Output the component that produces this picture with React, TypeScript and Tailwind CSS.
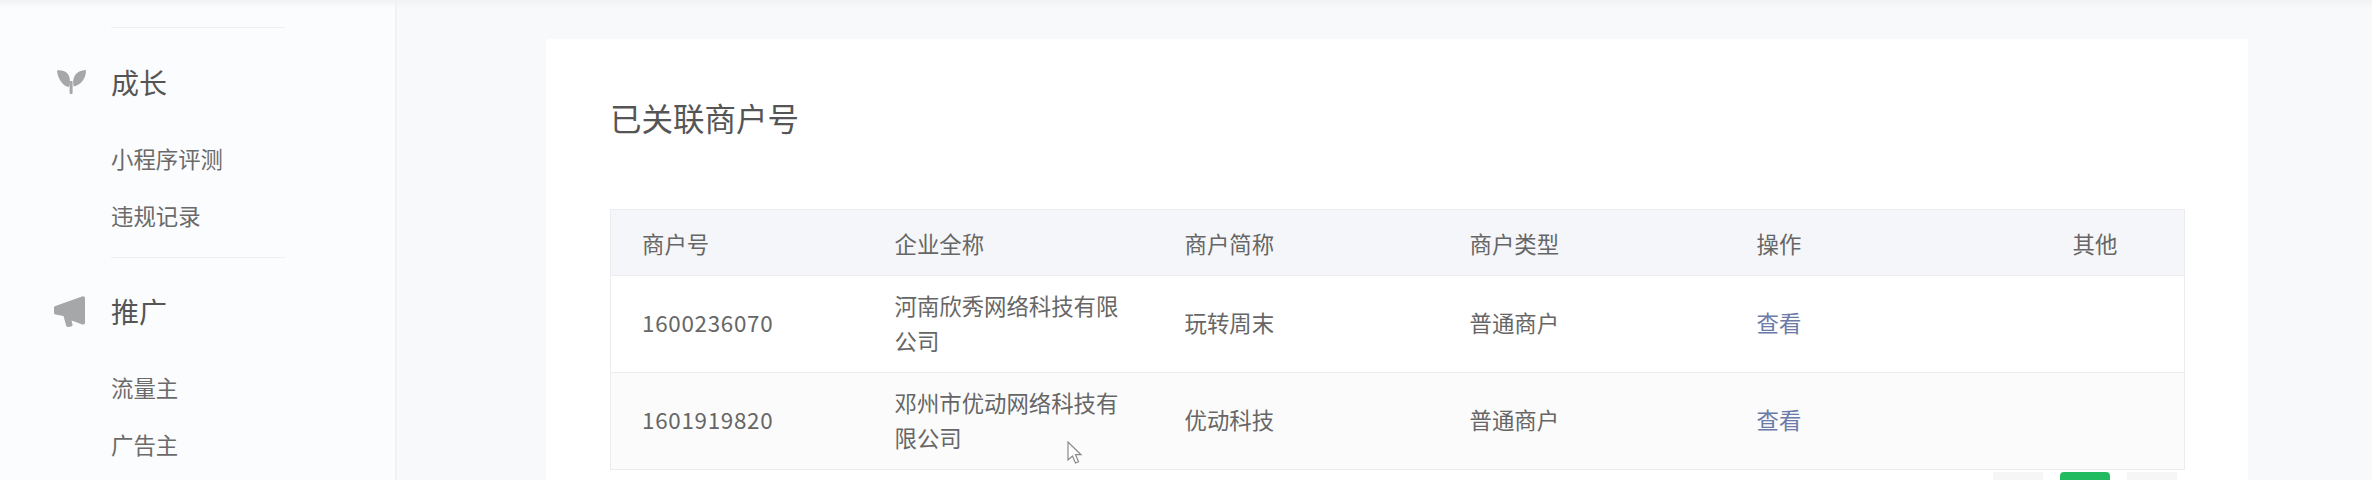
const FONT = "font-['Noto_Sans_CJK_SC','Noto_Sans',sans-serif]";

const HEADERS = ['商户号', '企业全称', '商户简称', '商户类型', '操作', '其他'];

const ROWS = [
  { id: '1600236070', company: '河南欣秀网络科技有限公司', short: '玩转周末', type: '普通商户' },
  { id: '1601919820', company: '邓州市优动网络科技有限公司', short: '优动科技', type: '普通商户' },
];

const NAV = [
  { title: '成长', icon: <SproutIcon />, items: ['小程序评测', '违规记录'] },
  { title: '推广', icon: <MegaphoneIcon />, items: ['流量主', '广告主'] },
];

function SproutIcon() {
  return (
    <svg viewBox="0 0 29 24" className="h-[24px] w-[29px] fill-[#a5a7a9]">
      <path d="M0 .4C3.500-.2 7.500.6 10 3c2.600 2.600 3.300 6.500 2.800 10.500-.1 1.500-.5 3-1.500 3.500C5.500 15.500.4 8 0 .4Z" />
      <path d="M29 0c0 4-1 8-3.500 11-2.200 2.800-5.500 4.800-8.800 5.400-.8-3.400-.9-7 .8-10.200C19.500 2 24.500.2 29 0Z" />
      <rect x="12.600" y="11" width="3" height="13" rx="1" />
    </svg>
  );
}

function MegaphoneIcon() {
  return (
    <svg viewBox="0 0 31 31" className="h-[31px] w-[31px] fill-[#a5a7a9]">
      <path d="M28 .4c1.600-.6 3 .2 3 1.600v24.800c0 1.400-1.200 2-2.600 1.600L17.500 24.500l1 4c.3 1.200-.3 1.800-1.300 2l-3 .5c-1 .1-1.600-.3-2-1.200L9.500 20 1.500 18.500C.6 18.300 0 17.600 0 16.700v-5c0-.9.5-1.500 1.400-1.800L28 .4Z" />
    </svg>
  );
}

function Sidebar() {
  return (
    <aside className="w-[397px] shrink-0 border-r-2 border-[#f1f2f4] bg-[#fbfcfd]">
      <div className="ml-[111px] mt-[27px] h-px w-[174px] bg-[#eff0f2]" />
      {NAV.map((section, i) => (
        <div key={section.title} className="pl-[54px]">
          <div className={`flex h-[40px] items-center ${i === 0 ? 'mt-[34px]' : 'mt-[33px]'}`}>
            <span className={`flex w-[57px] items-center ${i === 0 ? 'pl-[3px]' : ''}`}>{section.icon}</span>
            <span className="pb-[1px] text-[28px] leading-none text-[#555]">{section.title}</span>
          </div>
          <ul className="mt-[28px] pl-[57px]">
            {section.items.map(item => (
              <li key={item} className="flex h-[57px] items-center text-[22.4px] text-[#6a6a6a]">
                {item}
              </li>
            ))}
          </ul>
          {i === 0 && <div className="ml-[57px] mt-[13px] h-px w-[174px] bg-[#eff0f2]" />}
        </div>
      ))}
    </aside>
  );
}

function MerchantTable() {
  return (
    <table className="w-[1575px] table-fixed border-collapse border border-[#ececee] text-[22.4px] text-[#666]">
      <colgroup>
        <col className="w-[252px]" />
        <col className="w-[290px]" />
        <col className="w-[285px]" />
        <col className="w-[287px]" />
        <col className="w-[316px]" />
        <col />
      </colgroup>
      <thead>
        <tr className="h-[66px] bg-[#f5f6f9]">
          {HEADERS.map(h => (
            <th key={h} className="px-[32px] pt-[2px] text-left font-normal first:pl-[31px]">{h}</th>
          ))}
        </tr>
      </thead>
      <tbody>
        {ROWS.map((row, i) => (
          <tr key={row.id} className={`h-[97px] border-t border-[#ececee] ${i === 1 ? 'bg-[#fbfbfb]' : 'bg-white'}`}>
            <td className="pb-[3px] pl-[31px] pr-[32px] tracking-[0.7px]">{row.id}</td>
            <td className="px-[32px] pb-[3px] leading-[35px]">{row.company}</td>
            <td className="px-[32px] pb-[3px]">{row.short}</td>
            <td className="px-[32px] pb-[3px]">{row.type}</td>
            <td className="px-[32px] pb-[3px] text-[#6b7aa8]">查看</td>
            <td className="px-[32px]" />
          </tr>
        ))}
      </tbody>
    </table>
  );
}

export default function App() {
  return (
    <div className={`relative flex h-[480px] w-[2372px] overflow-hidden bg-[#f8f9fb] ${FONT}`}>
      <div className="absolute inset-x-0 top-0 h-[8px] bg-gradient-to-b from-[#f1f2f3] to-transparent" />
      <Sidebar />
      <main className="flex-1 pl-[149px] pt-[39px]">
        <div className="flex h-[441px] w-[1702px] flex-col rounded-[2px] bg-white pl-[64px]">
          <h1 className="mt-[54px] text-[31.500px] leading-[48px] font-normal text-[#555]">已关联商户号</h1>
          <div className="mt-[68px]">
            <MerchantTable />
          </div>
          <div className="mt-[2px] flex justify-end gap-[17px] pr-[71px]">
            <span className="h-[8px] w-[50px] bg-[#f6f6f6]" />
            <span className="h-[9px] w-[50px] rounded-t-[4px] bg-[#22bb5f]" />
            <span className="h-[8px] w-[50px] bg-[#f6f6f6]" />
          </div>
        </div>
      </main>
      <svg viewBox="0 0 16 24" className="absolute left-[1067px] top-[441px] h-[24px] w-[16px]">
        <path d="M1 1v18l4.500-4 3 7 3-1.300-3-7H14L1 1Z" fill="#fff" stroke="#8a8a8a" strokeWidth="1.200" />
      </svg>
    </div>
  );
}
